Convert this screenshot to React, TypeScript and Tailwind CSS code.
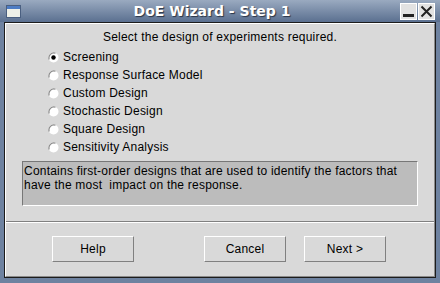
import React from "react";

const options = [
  "Screening",
  "Response Surface Model",
  "Custom Design",
  "Stochastic Design",
  "Square Design",
  "Sensitivity Analysis",
];

// small motif-ish radio circle
function Radio({ checked }: { checked: boolean }) {
  return (
    <svg width="11" height="11" viewBox="0 0 11 11">
      <circle cx="5.5" cy="5.5" r="5" fill="#ffffff" />
      <path d="M1.2 7.5 A5 5 0 0 1 7.5 1.2" fill="none" stroke="#8a8a8a" strokeWidth="1.2" />
      {checked && <circle cx="5.5" cy="5.5" r="2.2" fill="#000000" />}
    </svg>
  );
}

function Button({ label }: { label: string }) {
  return (
    <button className="w-[82px] h-[26px] bg-[#d9d9d9] border border-t-white border-l-white border-b-[#808080] border-r-[#808080] text-[12px] tracking-[0.22px] text-black">
      {label}
    </button>
  );
}

export default function App() {
  return (
    <div
      className="w-[440px] h-[283px] flex flex-col bg-[#6e82a0] overflow-hidden"
      style={{ fontFamily: '"Liberation Sans", Arial, sans-serif' }}
    >
      {/* Title bar */}
      <div className="h-[22px] flex items-center bg-gradient-to-b from-[#9aaac0] to-[#5b7090]">
        <div className="w-[24px] flex justify-end pr-[3px]">
          <div className="w-[15px] h-[13px] border border-[#4a5f80] bg-[#eef0e8] flex flex-col">
            <div className="h-[3px] bg-[#4d7cc4]" />
          </div>
        </div>
        <div
          className="flex-1 text-center text-white font-bold text-[14px] leading-[22px]"
          style={{ fontFamily: '"DejaVu Sans", sans-serif', textShadow: "1px 1px 1px #2a3446" }}
        >
          DoE Wizard - Step 1
        </div>
        <div className="flex gap-[1px] pr-[5px]">
          <div className="w-[17px] h-[17px] bg-[#e2e2e2] border border-[#ffffff] flex items-end justify-center pb-[2px]">
            <div className="w-[11px] h-[3px] bg-[#222]" />
          </div>
          <div className="w-[17px] h-[17px] bg-[#e2e2e2] border border-[#ffffff] flex items-center justify-center">
            <svg width="13" height="13" viewBox="0 0 13 13">
              <path d="M1.5 1.5 L11.5 11.5 M11.5 1.5 L1.5 11.5" stroke="#222" strokeWidth="2" />
            </svg>
          </div>
        </div>
      </div>

      {/* Body */}
      <div className="flex-1 mx-[4px] mb-[5px] border border-[#1c1c1c] flex">
        <div className="flex-1 flex flex-col bg-[#d9d9d9] border border-t-white border-l-white border-b-[#8a8a8a] border-r-[#8a8a8a] tracking-[0.22px]">
          <div className="pt-[6px] text-center text-[12px] leading-[15px] text-black">
            Select the design of experiments required.
          </div>

          <div className="mt-[3px] pl-[42px] flex flex-col">
            {options.map((o, i) => (
              <div key={o} className="h-[18px] flex items-center gap-[4px] text-[12px] text-black">
                <Radio checked={i === 0} />
                <span>{o}</span>
              </div>
            ))}
          </div>

          <div className="mt-[5px] ml-[16px] w-[396px] h-[45px] bg-[#bcbcbc] border border-t-[#777] border-l-[#777] border-b-white border-r-white pl-[1px] pt-[2px] text-[12px] leading-[14px] text-black">
            Contains first-order designs that are used to identify the factors that
            <br />
            have the most&nbsp; impact on the response.
          </div>

          <div className="mt-[15px] border-t border-t-[#808080] border-b border-b-white" />

          <div className="mt-[13px] pl-[46px] flex">
            <Button label="Help" />
            <div className="ml-[70px] flex gap-[18px]">
              <Button label="Cancel" />
              <Button label="Next >" />
            </div>
          </div>
        </div>
      </div>
    </div>
  );
}
